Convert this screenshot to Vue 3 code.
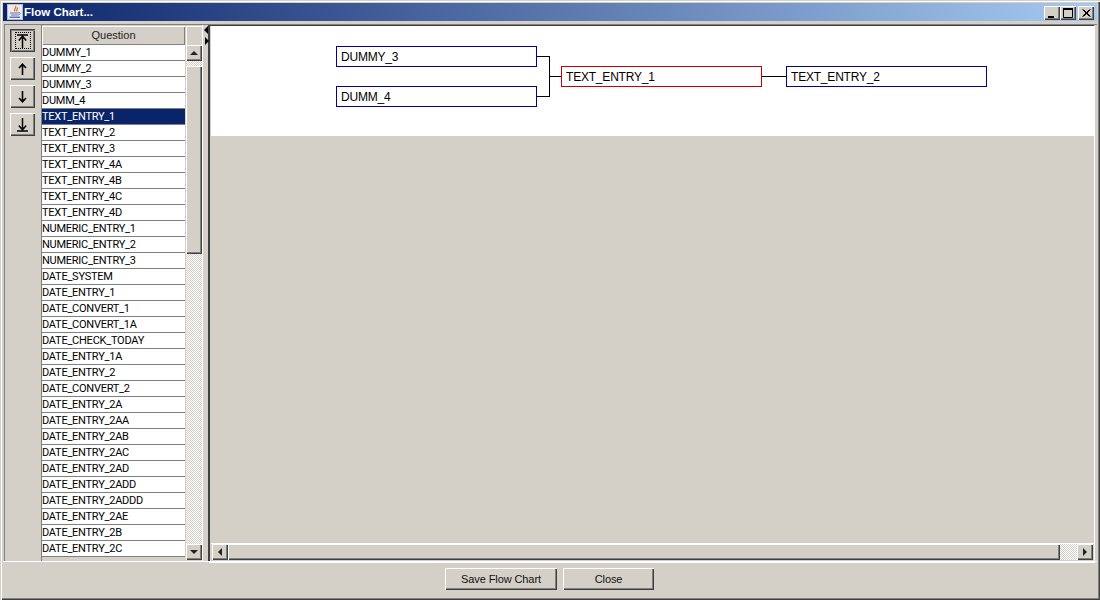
<script setup>
const rows = ['DUMMY_1','DUMMY_2','DUMMY_3','DUMM_4','TEXT_ENTRY_1','TEXT_ENTRY_2','TEXT_ENTRY_3','TEXT_ENTRY_4A','TEXT_ENTRY_4B','TEXT_ENTRY_4C','TEXT_ENTRY_4D','NUMERIC_ENTRY_1','NUMERIC_ENTRY_2','NUMERIC_ENTRY_3','DATE_SYSTEM','DATE_ENTRY_1','DATE_CONVERT_1','DATE_CONVERT_1A','DATE_CHECK_TODAY','DATE_ENTRY_1A','DATE_ENTRY_2','DATE_CONVERT_2','DATE_ENTRY_2A','DATE_ENTRY_2AA','DATE_ENTRY_2AB','DATE_ENTRY_2AC','DATE_ENTRY_2AD','DATE_ENTRY_2ADD','DATE_ENTRY_2ADDD','DATE_ENTRY_2AE','DATE_ENTRY_2B','DATE_ENTRY_2C']
const selected = 'TEXT_ENTRY_1'
const nodes = [
  { label: 'DUMMY_3', cls: 'n1' },
  { label: 'DUMM_4', cls: 'n2' },
  { label: 'TEXT_ENTRY_1', cls: 'n3 red' },
  { label: 'TEXT_ENTRY_2', cls: 'n4' }
]
</script>

<template>
  <div class="window">
    <div class="title">
      <svg class="jicon" width="16" height="16" viewBox="0 0 16 16">
        <rect x="0.5" y="0.5" width="15" height="15" fill="#eceaf0" stroke="#b8bcd0"/>
        <path d="M8.500 2c1.500 2-2.500 3-0.500 5.500M10.500 3.500c0.500 1.500-1.500 2-0.500 4" fill="none" stroke="#e0701c" stroke-width="1.300"/>
        <path d="M3 8.500h8.500v1h-8.500zM4 10.500h6.500v1h-6.500zM2.500 12.500h10.500v1.500h-10.500z" fill="#5a7ab8"/>
        <path d="M11.500 8.500c2.500 0 2 2.500-1 2.500" fill="none" stroke="#5a7ab8"/>
      </svg>
      <span class="title-text">Flow Chart...</span>
      <div class="winbtns">
        <button class="wb wb-min"><svg width="14" height="14"><rect x="3" y="10" width="6" height="2" fill="#000"/></svg></button>
        <button class="wb"><svg width="14" height="14"><path d="M2.500 2.500h9v9h-9z" fill="none" stroke="#000"/><rect x="2" y="2" width="10" height="2" fill="#000"/></svg></button>
        <button class="wb wb-close"><svg width="14" height="14"><path d="M3.500 3.500l7 7M4.500 3.500l7 7M10.500 3.500l-7 7M11.500 3.500l-7 7" stroke="#000" fill="none"/></svg></button>
      </div>
    </div>

    <div class="main">
      <div class="tools">
        <button class="tool focused">
          <span class="dots">
            <svg width="13" height="14" viewBox="0 0 13 14"><path d="M1 1h11M6.500 1.500v12.500M2.800 6.500l3.700-4.300 3.700 4.300" fill="none" stroke="#000" stroke-width="1.500"/></svg>
          </span>
        </button>
        <button class="tool"><svg width="9" height="12" viewBox="0 0 9 12"><path d="M4.500 1v11M1 5l3.500-3.800L8 5" fill="none" stroke="#000" stroke-width="1.600"/></svg></button>
        <button class="tool"><svg width="9" height="12" viewBox="0 0 9 12"><path d="M4.500 0v11M1 7l3.500 3.800L8 7" fill="none" stroke="#000" stroke-width="1.600"/></svg></button>
        <button class="tool"><svg width="13" height="14" viewBox="0 0 13 14"><path d="M1 13h11M6.500 0v12.500M2.800 7.500l3.700 4.300 3.700-4.300" fill="none" stroke="#000" stroke-width="1.500"/></svg></button>
      </div>

      <div class="list">
        <div class="head">
          <div class="head-cell">Question</div>
          <div class="head-corner"></div>
        </div>
        <div class="list-body">
          <div class="rows">
            <div v-for="r in rows" :key="r" class="row" :class="{ sel: r === selected }">{{ r }}</div>
          </div>
          <div class="vbar">
            <div class="arrow"><i class="tri up"></i></div>
            <div class="dither vgap1"></div>
            <div class="thumb vthumb"></div>
            <div class="dither vgap2"></div>
            <div class="arrow"><i class="tri down"></i></div>
          </div>
        </div>
      </div>

      <div class="splitter">
        <i class="tri sleft"></i>
        <i class="tri sright"></i>
      </div>

      <div class="pane">
        <div class="canvas">
          <svg class="wires" width="883" height="110">
            <path d="M326 30.500h12.500M326 70.500h12.500M338.500 30v41M338 50.500h12M551 50.500h24" fill="none" stroke="#000"/>
          </svg>
          <div v-for="n in nodes" :key="n.label" class="node" :class="n.cls">{{ n.label }}</div>
        </div>
        <div class="gray"></div>
        <div class="hbar">
          <div class="arrow"><i class="tri left"></i></div>
          <div class="thumb hthumb"></div>
          <div class="dither hgap"></div>
          <div class="arrow"><i class="tri right"></i></div>
        </div>
      </div>
    </div>

    <div class="footer">
      <button class="btn save">Save Flow Chart</button>
      <button class="btn close">Close</button>
    </div>
  </div>
</template>

<style scoped>
.window {
  width: 1100px;
  height: 600px;
  box-sizing: border-box;
  padding: 3px 3px 0;
  display: flex;
  flex-direction: column;
  background: #d4d0c8;
  font-family: "Liberation Sans", Arial, sans-serif;
  font-size: 11px;
  color: #000;
  box-shadow: inset 1px 1px 0 #d4d0c8, inset 2px 2px 0 #fff, inset -1px -1px 0 #404040, inset -2px -2px 0 #808080;
  overflow: hidden;
}
button { padding: 0; margin: 0; border: 0; font: inherit; color: inherit; background: #d4d0c8; display: flex; align-items: center; justify-content: center; }
.title {
  height: 18px;
  flex: none;
  display: flex;
  align-items: center;
  background: linear-gradient(90deg, #0a246a 0%, #a6caf0 100%);
}
.jicon { margin-left: 4px; }
.title-text { margin-left: 1px; color: #fff; font-weight: 700; font-size: 11.500px; }
.winbtns { margin-left: auto; display: flex; margin-right: 3px; }
.wb {
  width: 16px;
  height: 14px;
  margin-top: 1px;
  box-shadow: inset 1px 1px 0 #fff, inset -1px -1px 0 #404040, inset -2px -2px 0 #808080;
}
.wb-close { margin-left: 2px; }
.main {
  margin: 3px 0 0 1px;
  height: 538px;
  flex: none;
  display: flex;
  border-top: 1px solid #808080;
  box-sizing: border-box;
}
.tools {
  width: 37px;
  flex: none;
  box-sizing: border-box;
  border-left: 1px solid #808080;
  padding: 4px 0 0 5px;
  display: flex;
  flex-direction: column;
  gap: 5px;
  align-items: flex-start;
}
.tool {
  width: 25px;
  height: 23px;
  padding-right: 1px;
  box-shadow: inset 1px 1px 0 #fff, inset -1px -1px 0 #404040, inset -2px -2px 0 #808080;
}
.focused {
  padding-right: 0;
  box-shadow: inset 1px 1px 0 #404040, inset 2px 2px 0 #808080, inset -1px -1px 0 #404040, inset -2px -2px 0 #808080;
}
.dots { box-sizing: border-box; width: 16px; height: 17px; border: 1px dotted #000; display: flex; align-items: center; justify-content: center; }
.list {
  width: 161px;
  flex: none;
  border-left: 1px solid #808080;
  box-sizing: border-box;
  display: flex;
  flex-direction: column;
  padding-top: 1px;
  height: 100%;
}
.head { display: flex; height: 19px; flex: none; }
.head-cell {
  flex: 1;
  margin-right: 1px;
  text-align: center;
  line-height: 18px;
  box-shadow: inset 1px 1px 0 #fff, inset -1px -1px 0 #808080;
  color: #222;
}
.head-corner { width: 16px; box-shadow: inset 1px 1px 0 #fff; }
.list-body { flex: 1; display: flex; min-height: 0; padding-bottom: 2px; }
.rows { flex: 1; overflow: hidden; margin-right: 1px; }
.row {
  height: 16px;
  box-sizing: border-box;
  background: #fff;
  border-bottom: 1px solid #808080;
  line-height: 15px;
  white-space: nowrap;
  font-family: Roboto, "Liberation Sans", sans-serif;
  letter-spacing: -0.25px;
}
.row.sel { background: #0a246a; color: #fff; }
.vbar { width: 16px; flex: none; display: flex; flex-direction: column; }
.arrow {
  width: 16px;
  height: 16px;
  flex: none;
  background: #d4d0c8;
  box-shadow: inset 1px 1px 0 #fff, inset -1px -1px 0 #404040, inset -2px -2px 0 #808080;
  display: flex;
  align-items: center;
  justify-content: center;
}
.dither {
  background-image: repeating-conic-gradient(#fff 0 25%, #d4d0c8 0 50%);
  background-size: 2px 2px;
}
.thumb {
  background: #d4d0c8;
  box-shadow: inset 1px 1px 0 #fff, inset -1px -1px 0 #404040, inset -2px -2px 0 #808080;
}
.vgap1 { height: 5px; flex: none; }
.vthumb { height: 188px; flex: none; }
.vgap2 { flex: 1; }
.tri { display: block; width: 0; height: 0; border-style: solid; border-color: transparent; }
.up { border-width: 0 4px 4px; border-bottom-color: #222; }
.down { border-width: 4px 4px 0; border-top-color: #222; }
.left { border-width: 4px 4px 4px 0; border-right-color: #222; }
.right { border-width: 4px 0 4px 4px; border-left-color: #222; }
.splitter {
  width: 6px;
  flex: none;
  box-sizing: border-box;
  position: relative;
  box-shadow: inset 1px 0 0 #fff;
  height: 100%;
}
.sleft { position: absolute; left: 2px; top: 1px; border-width: 4px 4px 4px 0; border-right-color: #000; }
.sright { position: absolute; left: 3px; top: 12px; border-width: 4px 0 4px 4px; border-left-color: #000; }
.pane {
  flex: 1;
  display: flex;
  flex-direction: column;
  min-width: 0;
  box-sizing: border-box;
  border-left: 2px solid #404040;
  border-top: 1px solid #404040;
  margin-right: 3px;
  padding: 0 0 2px 1px;
  box-shadow: 1px 1px 0 #fff;
}
.canvas { height: 110px; flex: none; background: #fff; position: relative; }
.gray { flex: 1; background: #d4d0c8; }
.wires { position: absolute; left: 0; top: 0; }
.node {
  position: absolute;
  width: 201px;
  height: 21px;
  box-sizing: border-box;
  border: 1px solid #000099;
  background: #fff;
  font-size: 12px;
  letter-spacing: -0.2px;
  line-height: 20px;
  padding-left: 4px;
  white-space: nowrap;
}
.n1 { left: 125px; top: 20px; }
.n2 { left: 125px; top: 60px; }
.n3 { left: 350px; top: 40px; }
.n4 { left: 575px; top: 40px; }
.red { border-color: #cc0000; }
.hbar { height: 16px; flex: none; display: flex; padding: 0 1px; box-shadow: 0 -1px 0 #fff; }
.hthumb { flex: 1; }
.hgap { width: 17px; flex: none; }
.footer { flex: 1; display: flex; padding: 6px 0 0 442px; gap: 6px; align-items: flex-start; box-shadow: 0 -1px 0 #fff; }
.btn {
  height: 22px;
  color: #111;
  letter-spacing: -0.1px;
  box-shadow: inset 1px 1px 0 #fff, inset -1px -1px 0 #404040, inset -2px -2px 0 #808080;
}
.save { width: 112px; }
.close { width: 91px; }
</style>
